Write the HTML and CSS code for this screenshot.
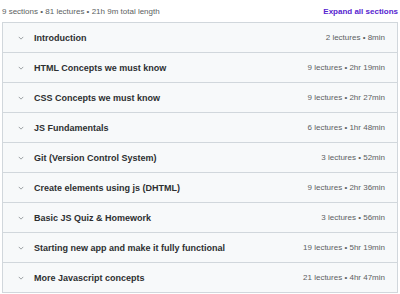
FILE: index.html
```html
<!DOCTYPE html>
<html lang="en">
<head>
  <meta charset="UTF-8">
  <title>Course content</title>
  <link rel="stylesheet" href="styles.css">
</head>
<body>
  <div class="summary">
    <span>9 sections • 81 lectures • 21h 9m total length</span>
    <button class="expand">Expand all sections</button>
  </div>

  <div class="sections">
    <div class="section">
      <span class="chev"><svg viewBox="0 0 8 5" width="6" height="4"><path d="M1 1l3 3 3-3" /></svg></span>
      <span class="title">Introduction</span>
      <span class="meta">2 lectures • 8min</span>
    </div>
    <div class="section">
      <span class="chev"><svg viewBox="0 0 8 5" width="6" height="4"><path d="M1 1l3 3 3-3" /></svg></span>
      <span class="title">HTML Concepts we must know</span>
      <span class="meta">9 lectures • 2hr 19min</span>
    </div>
    <div class="section">
      <span class="chev"><svg viewBox="0 0 8 5" width="6" height="4"><path d="M1 1l3 3 3-3" /></svg></span>
      <span class="title">CSS Concepts we must know</span>
      <span class="meta">9 lectures • 2hr 27min</span>
    </div>
    <div class="section">
      <span class="chev"><svg viewBox="0 0 8 5" width="6" height="4"><path d="M1 1l3 3 3-3" /></svg></span>
      <span class="title">JS Fundamentals</span>
      <span class="meta">6 lectures • 1hr 48min</span>
    </div>
    <div class="section">
      <span class="chev"><svg viewBox="0 0 8 5" width="6" height="4"><path d="M1 1l3 3 3-3" /></svg></span>
      <span class="title">Git (Version Control System)</span>
      <span class="meta">3 lectures • 52min</span>
    </div>
    <div class="section">
      <span class="chev"><svg viewBox="0 0 8 5" width="6" height="4"><path d="M1 1l3 3 3-3" /></svg></span>
      <span class="title">Create elements using js (DHTML)</span>
      <span class="meta">9 lectures • 2hr 36min</span>
    </div>
    <div class="section">
      <span class="chev"><svg viewBox="0 0 8 5" width="6" height="4"><path d="M1 1l3 3 3-3" /></svg></span>
      <span class="title">Basic JS Quiz &amp; Homework</span>
      <span class="meta">3 lectures • 56min</span>
    </div>
    <div class="section">
      <span class="chev"><svg viewBox="0 0 8 5" width="6" height="4"><path d="M1 1l3 3 3-3" /></svg></span>
      <span class="title">Starting new app and make it fully functional</span>
      <span class="meta">19 lectures • 5hr 19min</span>
    </div>
    <div class="section">
      <span class="chev"><svg viewBox="0 0 8 5" width="6" height="4"><path d="M1 1l3 3 3-3" /></svg></span>
      <span class="title">More Javascript concepts</span>
      <span class="meta">21 lectures • 4hr 47min</span>
    </div>
  </div>
</body>
</html>
```

FILE: styles.css
```css
body {
  margin: 0;
  padding: 0 2px 0 2px;
  font-family: "Liberation Sans", Arial, sans-serif;
  background-color: #fff;
  color: #2d2f31;
}

.summary {
  display: flex;
  justify-content: space-between;
  align-items: center;
  height: 22px;
  font-size: 8px;
  color: #5c5f62;
}

.expand {
  background: none;
  border: none;
  padding: 0;
  font-family: inherit;
  font-size: 8px;
  font-weight: bold;
  color: #5624d0;
  cursor: pointer;
}

.sections {
  border: 1px solid #d1d7dc;
  border-top: none;
}

.section {
  display: flex;
  align-items: center;
  height: 29px;
  padding: 0 12px 0 15px;
  background-color: #f7f9fa;
  border-top: 1px solid #d1d7dc;
}

.chev {
  display: flex;
  width: 16px;
}

.chev svg {
  fill: none;
  stroke: #8a8f93;
  stroke-width: 1.1;
}

.title {
  flex: 1;
  font-size: 9px;
  font-weight: bold;
}

.meta {
  font-size: 8px;
  color: #5c5f62;
}
```
